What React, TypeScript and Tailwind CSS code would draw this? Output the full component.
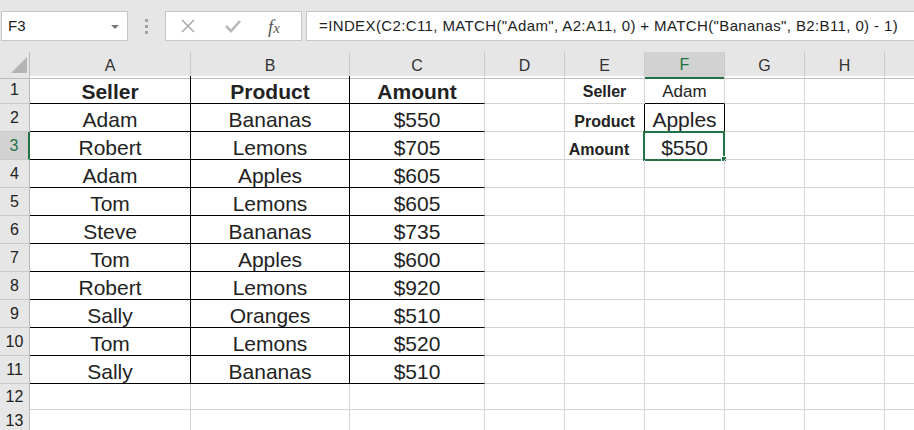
import React from "react";

const COLS = ["A", "B", "C", "D", "E", "F", "G", "H", ""];
const GRID = "grid grid-cols-[30px_161px_159px_135px_80px_80px_80px_80px_80px_80px]";

const data: [string, string, string][] = [
  ["Adam", "Bananas", "$550"],
  ["Robert", "Lemons", "$705"],
  ["Adam", "Apples", "$605"],
  ["Tom", "Lemons", "$605"],
  ["Steve", "Bananas", "$735"],
  ["Tom", "Apples", "$600"],
  ["Robert", "Lemons", "$920"],
  ["Sally", "Oranges", "$510"],
  ["Tom", "Lemons", "$520"],
  ["Sally", "Bananas", "$510"],
];

type Cell = { text?: string; cls?: string; txt?: string; extra?: React.ReactNode };

function Toolbar() {
  return (
    <div className="flex h-[52px] items-start bg-[#e6e6e6] pt-[11px]">
      {/* name box */}
      <div className="relative ml-[1px] flex h-[30px] w-[127px] items-center border border-[#c6c6c6] bg-white pl-[6px] text-[15px] text-[#222]">
        F3
        <span className="absolute right-[8px] top-[13px] h-0 w-0 border-x-[4px] border-t-[4px] border-x-transparent border-t-[#777]" />
      </div>
      <div className="flex h-[30px] w-[37px] flex-col items-center justify-center gap-[3px]">
        <span className="h-[3px] w-[3px] bg-[#a3a3a3]" />
        <span className="h-[3px] w-[3px] bg-[#a3a3a3]" />
        <span className="h-[3px] w-[3px] bg-[#a3a3a3]" />
      </div>
      {/* cancel / enter / fx */}
      <div className="flex h-[30px] w-[137px] items-center border border-[#c6c6c6] bg-white">
        <svg width="14" height="14" viewBox="0 0 14 14" className="ml-[15px]">
          <path d="M1 1 L13 13 M13 1 L1 13" stroke="#ababab" strokeWidth="1.6" />
        </svg>
        <svg width="16" height="14" viewBox="0 0 16 14" className="ml-[30px]">
          <path d="M1 7 L6 12 L15 2" stroke="#b8b8b8" strokeWidth="2.6" fill="none" />
        </svg>
        <span className="ml-[27px] font-['Liberation_Serif',serif] text-[19px] italic leading-none text-[#5a5a5a]">
          f<span className="text-[15px]">x</span>
        </span>
      </div>
      <div className="ml-[4px] mr-[-6px] flex h-[30px] flex-1 items-center border border-[#c6c6c6] bg-white pl-[12px] text-[15px] tracking-[0.38px] whitespace-nowrap text-[#222]">
        =INDEX(C2:C11, MATCH("Adam", A2:A11, 0) + MATCH("Bananas", B2:B11, 0) - 1)
      </div>
    </div>
  );
}

function HeaderRow() {
  return (
    <div className={`${GRID} h-[24px] bg-[#e6e6e6]`}>
      <div className="relative border-r border-b border-[#bcbcbc]">
        <svg width="16" height="16" viewBox="0 0 16 16" className="absolute left-[11px] top-[5px]">
          <path d="M16 0 L16 16 L0 16 Z" fill="#b4b4b4" />
        </svg>
      </div>
      {COLS.map((c, i) =>
        c === "F" ? (
          <div
            key={i}
            className="flex items-center justify-center border-r border-b-2 border-r-[#c8c8c8] border-b-[#217346] bg-[#d2d2d2] pt-[1px] text-[16px] text-[#217346]"
          >
            {c}
          </div>
        ) : (
          <div
            key={i}
            className="flex items-center justify-center border-r border-b border-r-[#c8c8c8] border-b-[#bcbcbc] pt-[1px] text-[16px] text-[#333]"
          >
            {c}
          </div>
        )
      )}
    </div>
  );
}

function Row({ n, cells, h = "h-[28px]" }: { n: number; cells: Cell[]; h?: string }) {
  const sel = n === 3;
  return (
    <div className={`${GRID} ${h}`}>
      <div
        className={
          sel
            ? "flex items-center justify-center border-r-2 border-b border-r-[#217346] border-b-[#c8c8c8] bg-[#d2d2d2] pt-[1px] text-[16px] text-[#217346]"
            : "flex items-center justify-center border-r border-b border-r-[#bcbcbc] border-b-[#c8c8c8] bg-[#e6e6e6] pt-[1px] text-[16px] text-[#222]"
        }
      >
        {n}
      </div>
      {COLS.map((_, i) => {
        const cell = cells[i] || {};
        return (
          <div
            key={i}
            className={`relative flex items-end justify-center border-r border-b leading-none ${cell.cls ?? "border-[#d4d4d4]"} ${cell.txt ?? "text-[21px] pb-[1px]"}`}
          >
            {cell.text}
            {cell.extra}
          </div>
        );
      })}
    </div>
  );
}

export default function App() {
  const black = "border-black";
  const tableCell = (text: string, i: number, bold = false): Cell => ({
    text,
    cls: i < 2 ? black : "border-r-[#d4d4d4] border-b-black",
    txt: bold ? "text-[21px] font-bold pb-[1px]" : "text-[21px] pb-[1px]",
  });

  const side: Record<number, Cell[]> = {
    1: [
      {},
      { text: "Seller", txt: "text-[16px] font-bold pb-[3px]" },
      { text: "Adam", cls: "border-r-[#d4d4d4] border-b-black", txt: "text-[17px] pb-[3px]" },
    ],
    2: [
      {},
      { text: "Product", cls: "border-r-black border-b-[#d4d4d4]", txt: "text-[16px] font-bold pb-[1px]" },
      { text: "Apples", cls: "border-black", txt: "text-[21px] pb-[1px]" },
    ],
    3: [
      {},
      { text: "Amount", txt: "text-[16px] font-bold pb-[1px] pr-[11px]" },
      {
        text: "$550",
        txt: "text-[21px] pb-[1px]",
        extra: (
          <>
            <span className="pointer-events-none absolute -left-[2px] -top-[1px] h-[30px] w-[82px] border-2 border-[#217346]" />
            <span className="absolute -right-[3px] -bottom-[3px] h-[6px] w-[6px] border border-white bg-[#217346]" />
          </>
        ),
      },
    ],
  };

  const rows: Cell[][] = [];
  rows.push([
    tableCell("Seller", 0, true),
    tableCell("Product", 1, true),
    tableCell("Amount", 2, true),
    ...side[1],
  ]);
  data.forEach((d, r) => {
    const base = d.map((t, i) => tableCell(t, i));
    rows.push([...base, ...(side[r + 2] || [])]);
  });

  return (
    <div className="h-[430px] w-[914px] overflow-hidden bg-white font-['Liberation_Sans',Arial,sans-serif] text-[#222]">
      <Toolbar />
      <HeaderRow />
      {rows.map((cells, i) => (
        <Row key={i} n={i + 1} cells={cells} />
      ))}
      <Row n={12} cells={[]} h="h-[24px]" />
      <Row n={13} cells={[]} h="h-[24px]" />
    </div>
  );
}
